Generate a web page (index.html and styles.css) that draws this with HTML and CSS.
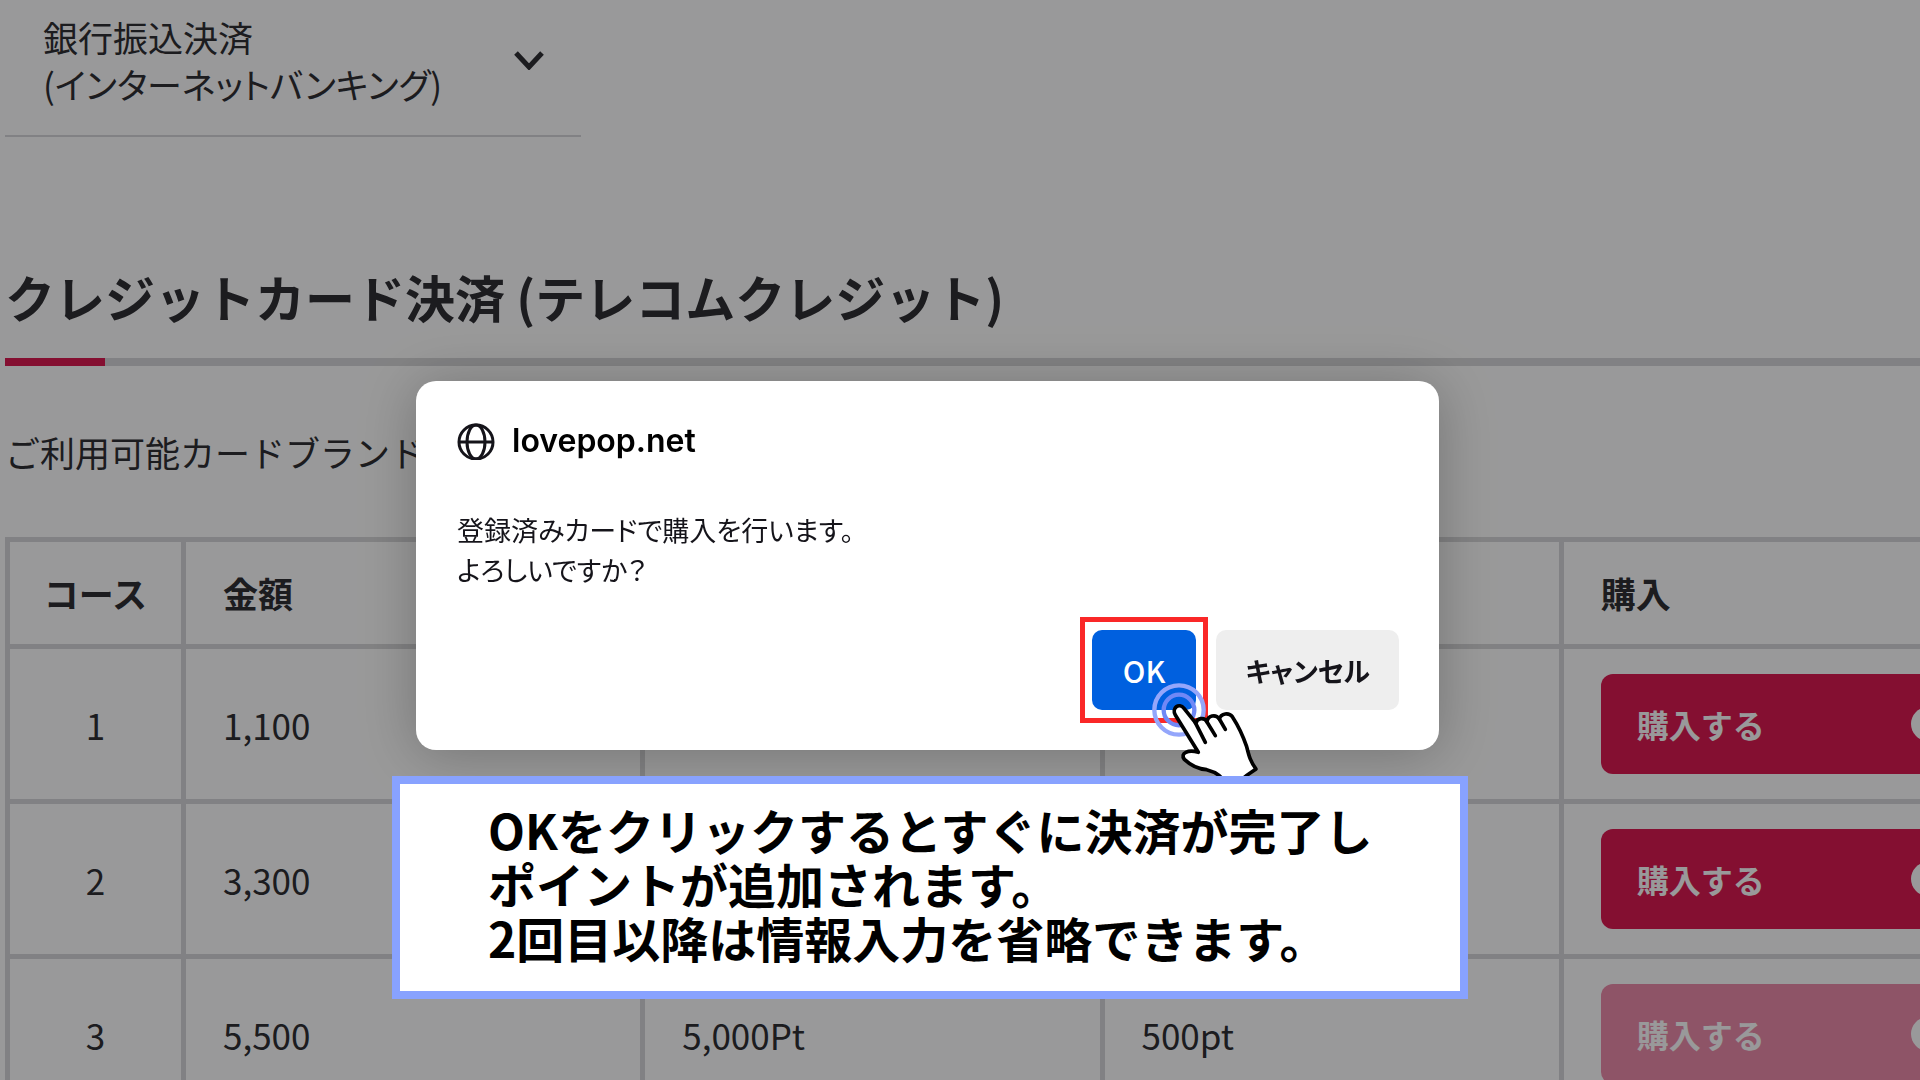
FILE: index.html
```html
<!DOCTYPE html>
<html lang="ja">
<head>
<meta charset="utf-8">
<meta name="viewport" content="width=device-width, initial-scale=1">
<title>クレジットカード決済</title>
<link rel="stylesheet" href="styles.css">
</head>
<body>
<main class="page">
  <a class="jump" href="#bank">
    <span class="jump-label">銀行振込決済<br>(インターネットバンキング)</span>
    <svg class="jump-icon" viewBox="0 0 30 20" aria-hidden="true"><path d="M2 3l13 14L28 3"/></svg>
  </a>

  <h2 class="heading">クレジットカード決済 (テレコムクレジット)</h2>
  <p class="brands">ご利用可能カードブランド</p>

  <table class="courses">
    <colgroup><col class="col-course"><col><col><col><col></colgroup>
    <thead>
      <tr><th class="center" scope="col">コース</th><th scope="col">金額</th><th></th><th></th><th scope="col">購入</th></tr>
    </thead>
    <tbody>
      <tr>
        <td class="center">1</td><td>1,100</td><td></td><td></td>
        <td><button class="buy" type="button">購入する<span class="buy-dot"></span></button></td>
      </tr>
      <tr>
        <td class="center">2</td><td>3,300</td><td></td><td></td>
        <td><button class="buy" type="button">購入する<span class="buy-dot"></span></button></td>
      </tr>
      <tr>
        <td class="center">3</td><td>5,500</td><td>5,000Pt</td><td>500pt</td>
        <td><button class="buy" type="button" disabled>購入する<span class="buy-dot"></span></button></td>
      </tr>
    </tbody>
  </table>
</main>

<div class="overlay">
  <div class="stack">
    <section class="dialog" role="dialog" aria-labelledby="site" aria-describedby="message">
      <header class="dialog-head">
        <svg class="globe" viewBox="0 0 38 38" aria-hidden="true">
          <circle cx="19" cy="20" r="17"/>
          <ellipse cx="19" cy="20" rx="9" ry="17"/>
          <path d="M2 20h34"/>
        </svg>
        <span id="site">lovepop.net</span>
      </header>
      <p class="message" id="message">登録済みカードで購入を行います。<br>よろしいですか？</p>
      <div class="actions">
        <span class="target">
          <button class="btn btn-ok" type="button">OK</button>
          <svg class="pointer" viewBox="270 240 330 330" aria-hidden="true">
            <circle cx="357" cy="330" r="74" fill="none" stroke="#94a6fb" stroke-width="13"/>
            <circle cx="357" cy="330" r="46" fill="none" stroke="#7088f6" stroke-width="13"/>
            <path class="hand" d="M415 457L346 345C334 325 357 306 372 325L408 370C410 354 433 350 441 366C443 346 467 341 478 357C483 339 507 337 517 350C530 370 550 410 560 440C567 468 570 482 588 507C565 524 545 530 535 560L505 560C490 530 465 515 440 509C415 507 390 494 373 478C359 459 385 448 415 457Z"/>
            <path class="hand-line" d="M404 364L436 427M441 366L466 407M478 357L496 388"/>
          </svg>
        </span>
        <button class="btn btn-cancel" type="button">キャンセル</button>
      </div>
    </section>
    <p class="callout">OKをクリックするとすぐに決済が完了し<br>ポイントが追加されます。<br>2回目以降は情報入力を省略できます。</p>
  </div>
</div>
</body>
</html>
```
FILE: styles.css
```css
* {
  box-sizing: border-box;
}

body {
  margin: 0;
  background: #fff;
  color: #2f2f33;
  font-family: "Noto Sans CJK JP", sans-serif;
  font-size: 35px;
  line-height: 47px;
}

button {
  border: 0;
  font-family: inherit;
}

.page {
  height: 100vh;
  padding-left: 5px;
  overflow: hidden;
}

/* Link to the bank transfer section */
.jump {
  display: flex;
  align-items: center;
  justify-content: space-between;
  width: 30vw;
  padding: 13px 37px 28px 38px;
  border-bottom: 2px solid #d8d8da;
  color: inherit;
  text-decoration: none;
}

.jump-label {
  font-feature-settings: "palt";
  white-space: nowrap;
}

.jump-icon {
  width: 30px;
  height: 20px;
  fill: none;
  stroke: #2f2f33;
  stroke-width: 5;
}

.heading {
  position: relative;
  margin: 124px 0 0;
  padding-bottom: 27px;
  border-bottom: 8px solid #d8d8da;
  font-size: 50px;
  line-height: 70px;
  font-weight: 700;
}

.heading::after {
  content: "";
  position: absolute;
  left: 0;
  top: 100%;
  width: 100px;
  height: 8px;
  background: #dc1950;
}

.brands {
  margin: 62px 0;
}

/* Course table, wider than the window */
.courses {
  width: calc(105vw + 2px);
  table-layout: fixed;
  border-collapse: collapse;
}

.col-course {
  width: 176px;
}

.courses th,
.courses td {
  height: 155px;
  padding: 0 37px;
  border: 5px solid #d8d8da;
  text-align: left;
}

.courses th {
  height: 107px;
  padding-bottom: 2px;
  font-weight: 700;
}

.courses .center {
  padding-left: 0;
  padding-right: 0;
  text-align: center;
}

.buy {
  display: flex;
  align-items: center;
  justify-content: space-between;
  width: 100%;
  height: 100px;
  padding: 0 36px;
  border-radius: 12px;
  background: #dc1950;
  color: #fff;
  font-size: 32px;
  font-weight: 700;
}

.buy:disabled {
  background: #ed8caa;
}

.buy-dot {
  width: 34px;
  height: 34px;
  border-radius: 50%;
  background: #fff;
}

/* Dimmed layer with the dialog and its caption */
.overlay {
  position: fixed;
  inset: 0;
  padding: 381px 60px 0 0;
  background: rgba(0, 0, 3, 0.4);
  color: #000;
}

.stack {
  display: flex;
  flex-direction: column;
  gap: 26px;
  max-width: 1076px;
  margin: 0 auto;
}

.dialog {
  margin: 0 29px 0 24px;
  padding: 40px 40px 40px 41px;
  border-radius: 20px;
  background: #fff;
  box-shadow: 0 4px 56px rgba(0, 0, 0, 0.25);
}

.dialog-head {
  display: flex;
  align-items: center;
  gap: 17px;
  font-family: Inter, sans-serif;
  font-size: 32px;
  line-height: 40px;
  font-weight: 600;
}

.globe {
  width: 38px;
  height: 38px;
  fill: none;
  stroke: #15141a;
  stroke-width: 3;
}

.message {
  margin: 49px 0 40px;
  color: #15141a;
  font-size: 27px;
  line-height: 40px;
  font-feature-settings: "palt";
}

.actions {
  display: flex;
  justify-content: flex-end;
  gap: 20px;
}

.btn {
  height: 80px;
  padding: 0 31px;
  border-radius: 10px;
  font-size: 27px;
  font-weight: 500;
  font-feature-settings: "palt";
}

.btn-ok {
  background: #0060df;
  color: #fff;
  font-size: 30px;
}

.btn-cancel {
  padding: 0 29px;
  background: #eee;
  color: #15141a;
  font-weight: 700;
}

.target {
  position: relative;
  display: flex;
}

.target::before {
  content: "";
  position: absolute;
  inset: -13px -12px;
  border: 5px solid #fa2828;
}

.pointer {
  position: absolute;
  left: 58px;
  top: 50px;
  width: 110px;
  height: 110px;
}

.hand {
  fill: #fff;
  stroke: #000;
  stroke-width: 11;
  stroke-linejoin: round;
}

.hand-line {
  fill: none;
  stroke: #000;
  stroke-width: 11;
  stroke-linecap: round;
}

.callout {
  position: relative;
  margin: 0;
  padding: 18px 20px 27px 88px;
  border: 8px solid #88a2ff;
  background: #fff;
  font-size: 48px;
  line-height: 54px;
  font-weight: 700;
}
```
